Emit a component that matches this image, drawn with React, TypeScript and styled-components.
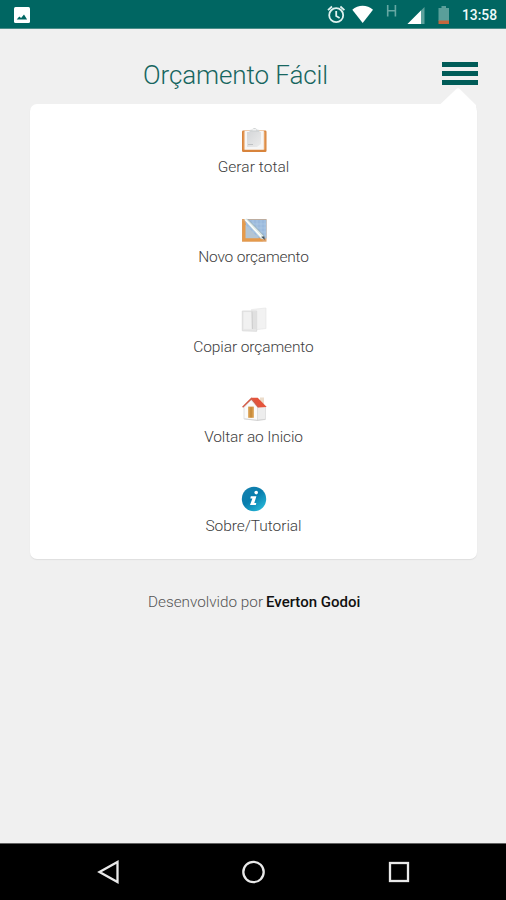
import React from 'react';
import styled, { createGlobalStyle } from 'styled-components';

const GlobalStyle = createGlobalStyle`
  * { box-sizing: border-box; }
  body { margin: 0; background: #f0f0f0; font-family: Roboto, "Open Sans", sans-serif; }
`;

const Screen = styled.div`
  width: 506px;
  height: 900px;
  display: flex;
  flex-direction: column;
  background: #f0f0f0;
  overflow: hidden;
`;

const StatusBar = styled.header`
  height: 29px;
  flex: none;
  display: flex;
  align-items: flex-start;
  justify-content: space-between;
  background: #006662;
  border-bottom: 1px solid #4b8d89;
  padding: 0 8px 0 14px;
`;

const PhotoIcon = styled.svg`
  margin-top: 7px;
`;

const StatusGroup = styled.div`
  display: flex;
  align-items: flex-start;
`;

const Clock = styled.time`
  width: 36px;
  margin-left: 11px;
  padding-top: 7px;
  font-size: 13.8px;
  line-height: 17px;
  font-weight: 500;
  color: #eefafa;
  white-space: nowrap;
`;

const TitleBar = styled.div`
  height: 75px;
  flex: none;
  display: grid;
  grid-template-columns: 30px 412px 36px;
`;

const Title = styled.h1`
  grid-column: 2;
  margin: 0;
  padding: 29px 0 0 113px;
  font-size: 26px;
  line-height: 34px;
  font-weight: 300;
  letter-spacing: -0.1px;
  color: #17665f;
  white-space: nowrap;
`;

const MenuButton = styled.button`
  display: flex;
  flex-direction: column;
  gap: 4px;
  width: 36px;
  height: 22px;
  margin: 33px 0 0;
  padding: 0;
  border: 0;
  background: none;
`;

const MenuBar = styled.span`
  width: 36px;
  height: 5px;
  flex: none;
  background: #005c58;
`;

const MenuCard = styled.nav`
  position: relative;
  width: 447px;
  height: 455px;
  flex: none;
  margin-left: 30px;
  padding-top: 23px;
  display: flex;
  flex-direction: column;
  background: #fff;
  border-radius: 7px;
  box-shadow: 0 1px 1px #dedede;
`;

const Pointer = styled.svg`
  position: absolute;
  top: -17px;
  right: 0;
`;

const MenuItem = styled.a`
  height: 89.75px;
  flex: none;
  display: flex;
  flex-direction: column;
  align-items: center;
`;

const ItemIcon = styled.svg`
  width: 26px;
  height: 26px;
  flex: none;
`;

const Label = styled.span<{ $spacing: number }>`
  margin-top: 4.4px;
  font-size: 15.5px;
  line-height: 20px;
  font-weight: 300;
  letter-spacing: ${({ $spacing }) => $spacing}px;
  color: #3d3d3d;
  white-space: nowrap;
`;

const Credit = styled.p`
  margin: 32px 0 0 148px;
  height: 22px;
  display: flex;
  gap: 4px;
  font-size: 15.3px;
  line-height: 22px;
  font-weight: 300;
  color: #555;
  white-space: nowrap;
`;

const CreditText = styled.span`
  width: 114px;
`;

const Author = styled.strong`
  font-weight: 500;
  font-size: 15px;
  color: #111;
`;

const NavBar = styled.footer`
  height: 57px;
  flex: none;
  margin-top: auto;
  padding: 0 36px;
  display: grid;
  grid-template-columns: repeat(3, 1fr);
  justify-items: center;
  background: #000;
  border-top: 1px solid #626262;
`;

const NavIcon = styled.svg`
  width: 26px;
  height: 26px;
  margin-top: 15px;
  fill: none;
  stroke: #e9e9e9;
  stroke-width: 2.3;
`;

const Clipboard = () => (
  <ItemIcon viewBox="0 0 26 26">
    <defs>
      <linearGradient id="sheet" x1="0" y1="0" x2="1" y2="1">
        <stop offset="0" stopColor="#d4d6d8" />
        <stop offset="1" stopColor="#ececec" />
      </linearGradient>
    </defs>
    <rect x="1" y="3.5" width="24.5" height="21.5" rx="1.2" fill="#d8843c" />
    <path d="M2.5 4.5h21.8v18.2H2.5z" fill="#e8a568" />
    <path d="M3.6 3.8h19.2v18.9H3.6z" fill="#f6f6f6" />
    <path d="M6 5h14v12l-4 3H6z" fill="url(#sheet)" />
    <path d="M7 17.5h5" stroke="#bfc2c4" />
    <path d="M8.5 5V3.1l3-.6c.4-2 3.7-2 4.1 0l2.9.6V5z" fill="#d2d5d6" />
    <path d="M11.5 2.8h3.5" stroke="#fff" />
  </ItemIcon>
);

const Drafting = () => (
  <ItemIcon viewBox="0 0 26 26">
    <rect x="1" y="2" width="24.5" height="22.7" fill="#dfa064" />
    <rect x="4.5" y="2.5" width="21" height="19" fill="#9bb9dc" />
    <path d="M8 3v18M12 3v18M16 3v18M20 3v18M24 3v18M5 7h20M5 11h20M5 15h20M5 19h20" stroke="#b2cce8" strokeWidth=".6" />
    <path d="M1.4 3.5v20.8H22l-3.5-3.5H5V7z" fill="#e59a4b" />
    <path d="M4.5 7.5v13.8h13.6z" fill="#b3c5d4" />
    <path d="m3 2.4 3-1 17.8 18-.9 2.8-3-.8z" fill="#dbe8e6" />
    <path d="m4.3 2.6 16.1 17.2" stroke="#fff" strokeWidth="1.2" />
    <path d="m6.8 2.3 16.7 17" stroke="#78929d" strokeWidth=".6" />
    <path d="m20.2 19.7 3.6 3.2-.4-3.6z" fill="#425260" />
  </ItemIcon>
);

const Copy = () => (
  <ItemIcon viewBox="0 0 26 26">
    <path d="M10.5 2.5 25 1v20.5L12.5 23z" fill="#f2f2f2" stroke="#e6e6e6" strokeWidth=".7" />
    <path d="M1.3 4h14.4v20.3L1.3 23.8z" fill="#e8e8e8" stroke="#d8d8d8" strokeWidth=".8" />
    <path d="M2.7 5.2h8v16.7h-8z" fill="#f1f1f1" />
    <path d="M10.7 4.5h5v17.8h-5z" fill="#e0e0e0" />
    <path d="m11 4.5.5 17.5" stroke="#c5c5c5" strokeWidth=".7" />
  </ItemIcon>
);

const Home = () => (
  <ItemIcon viewBox="0 0 26 26">
    <path d="M19 1.5h4v10l-4-4z" fill="#ecdcca" />
    <path d="M3 11.5 10 4l7 8v12.5L3 23z" fill="#fbfbfb" stroke="#d2d2d2" strokeWidth=".6" />
    <path d="M16.5 10.5h8v13l-8 1z" fill="#ededed" stroke="#d4d4d4" strokeWidth=".6" />
    <path d="M10 1.7h6.7l9 9.3-8.2.6z" fill="#e4543c" />
    <path d="m1.6 11.2 8.7-8.6 7.3 8.6" fill="none" stroke="#d25d49" strokeWidth="1.5" />
    <path d="M7.2 10.6h5.6v11.2H7.2z" fill="#d69a49" />
    <path d="M10 11.3V21.5" stroke="#b67b30" strokeWidth=".8" />
    <path d="M3.5 22.8 16 24.3l8-1" fill="none" stroke="#c8c8c8" strokeWidth=".6" />
  </ItemIcon>
);

const Info = () => (
  <ItemIcon viewBox="0 0 26 26">
    <defs>
      <linearGradient id="infoBlue" x1="0" y1="0" x2=".8" y2="1">
        <stop offset="0" stopColor="#1781ae" />
        <stop offset=".5" stopColor="#087dad" />
        <stop offset="1" stopColor="#27b9d9" />
      </linearGradient>
    </defs>
    <circle cx="13" cy="13" r="12.2" fill="url(#infoBlue)" />
    <circle cx="15.2" cy="6.6" r="1.8" fill="#fff" />
    <path d="M9.8 10.3h5.6L13.3 17h2l-.5 1.9H9l2.4-6.5H9.3z" fill="#fff" />
  </ItemIcon>
);

const items = [
  { label: 'Gerar total', spacing: 0.05, Icon: Clipboard },
  { label: 'Novo orçamento', spacing: -0.2, Icon: Drafting },
  { label: 'Copiar orçamento', spacing: -0.1, Icon: Copy },
  { label: 'Voltar ao Inicio', spacing: -0.13, Icon: Home },
  { label: 'Sobre/Tutorial', spacing: -0.05, Icon: Info },
];

export default function App() {
  return (
    <Screen>
      <GlobalStyle />
      <StatusBar>
        <PhotoIcon width="16" height="16" viewBox="0 0 16 16">
          <rect width="16" height="16" rx="1.5" fill="#fff" />
          <path d="m2.7 12.4 2.6-3 1.8 1.7 2.9-3.5 3.1 4.8z" fill="#006662" />
        </PhotoIcon>
        <StatusGroup>
          <svg width="124" height="28" viewBox="327 0 124 28">
            <g fill="none" stroke="#e0f2ef" strokeWidth="1.8">
              <circle cx="336.2" cy="15.2" r="7" />
              <path d="m328 10.2 4-3.7m8.4 0 4 3.7M336.2 11v5l3.4 2" />
            </g>
            <path d="M352.3 9.8c5.7-5.3 15-5.3 20.7 0L362.7 23z" fill="#fff" />
            <path d="M387.7 5v11.5M395.4 5v11.5M387.7 10.8h7.7" stroke="#66a8a3" strokeWidth="1.6" />
            <path d="M424.5 7v17h-17z" fill="#5da19c" />
            <path d="M421 10.5V24h-13.5z" fill="#fff" />
            <path d="M438.5 8h3V6h4.5v2h3v13h-10.5z" fill="#5a9f9a" />
            <path d="M438.5 20.5H449V24h-10.5z" fill="#c4673d" />
          </svg>
          <Clock>13:58</Clock>
        </StatusGroup>
      </StatusBar>
      <TitleBar>
        <Title>Orçamento Fácil</Title>
        <MenuButton aria-label="Menu">
          <MenuBar />
          <MenuBar />
          <MenuBar />
        </MenuButton>
      </TitleBar>
      <MenuCard>
        <Pointer width="38" height="27" viewBox="0 0 38 27">
          <path d="M0 17h1.5L17 2.2q2-2 4 0L37 18v9H0z" fill="#fff" />
        </Pointer>
        {items.map(({ label, spacing, Icon }) => (
          <MenuItem key={label}>
            <Icon />
            <Label $spacing={spacing}>{label}</Label>
          </MenuItem>
        ))}
      </MenuCard>
      <Credit>
        <CreditText>Desenvolvido por</CreditText>
        <Author>Everton Godoi</Author>
      </Credit>
      <NavBar>
        <NavIcon viewBox="0 0 26 26">
          <path d="M22.5 3v20L4.5 13z" />
        </NavIcon>
        <NavIcon viewBox="0 0 26 26">
          <circle cx="13.5" cy="13" r="10.2" />
        </NavIcon>
        <NavIcon viewBox="0 0 26 26">
          <rect x="5" y="4" width="18" height="18" />
        </NavIcon>
      </NavBar>
    </Screen>
  );
}
